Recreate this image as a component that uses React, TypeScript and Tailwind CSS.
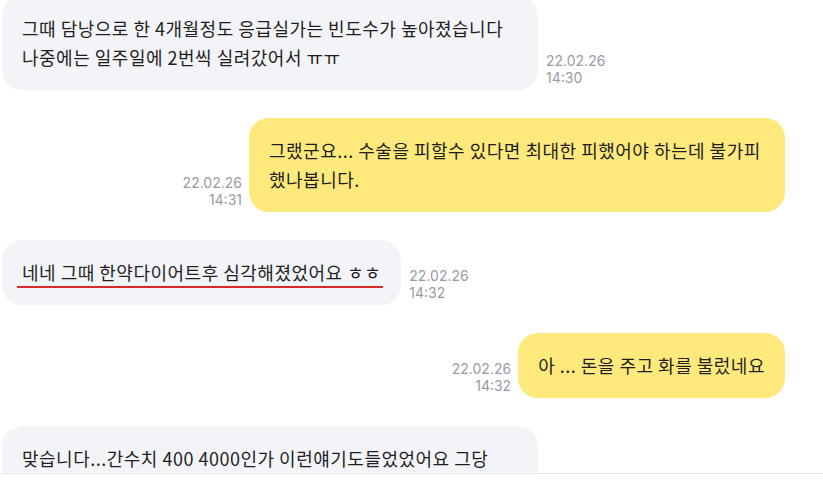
const textFont = "font-['Noto_Sans_CJK_KR','Noto_Sans',sans-serif]";
const timeFont = "font-['Inter','Noto_Sans',sans-serif]";

type Msg = {
  side: "left" | "right";
  lines: string[];
  date: string;
  time: string;
  wide?: boolean;
  mark?: boolean;
};

const messages: Msg[] = [
  {
    side: "left",
    lines: ["그때 담낭으로 한 4개월정도 응급실가는 빈도수가 높아졌습니다", "나중에는 일주일에 2번씩 실려갔어서 ㅠㅠ"],
    date: "22.02.26",
    time: "14:30",
    wide: true,
  },
  {
    side: "right",
    lines: ["그랬군요... 수술을 피할수 있다면 최대한 피했어야 하는데 불가피", "했나봅니다."],
    date: "22.02.26",
    time: "14:31",
    wide: true,
  },
  {
    side: "left",
    lines: ["네네 그때 한약다이어트후 심각해졌었어요 ㅎㅎ"],
    date: "22.02.26",
    time: "14:32",
    mark: true,
  },
  {
    side: "right",
    lines: ["아 ... 돈을 주고 화를 불렀네요"],
    date: "22.02.26",
    time: "14:32",
  },
  {
    side: "left",
    lines: ["맞습니다...간수치 400 4000인가 이런얘기도들었었어요 그당"],
    date: "22.02.26",
    time: "14:33",
    wide: true,
  },
];

function Stamp({ date, time, right }: { date: string; time: string; right?: boolean }) {
  return (
    <div
      className={`${timeFont} flex flex-col pb-[4px] text-[14px] leading-[17px] text-[#9a9aa6] ${
        right ? "items-end" : "items-start"
      }`}
    >
      <span>{date}</span>
      <span>{time}</span>
    </div>
  );
}

function Bubble({ m }: { m: Msg }) {
  const bg = m.side === "left" ? "bg-[#f3f4f8]" : "bg-[#fee97d]";
  return (
    <div
      className={`relative rounded-[20px] ${bg} ${m.wide ? "w-[536px]" : "w-fit"} px-[20px] py-[18px] ${textFont} text-[18px] leading-[29px] tracking-[0.5px] text-[#1f1f1f] whitespace-nowrap overflow-hidden`}
    >
      {m.lines.map((l, i) => (
        <div key={i}>{l}</div>
      ))}
      {m.mark && <div className="absolute left-[15px] right-[18px] bottom-[17px] h-[2px] bg-[#d92a2a]" />}
    </div>
  );
}

export default function App() {
  return (
    <div className="flex h-[483px] w-[823px] flex-col overflow-hidden bg-white">
      <div className="flex flex-1 flex-col gap-[28px] overflow-hidden">
        {messages.map((m, i) =>
          m.side === "left" ? (
            <div key={i} className={`flex items-end gap-[8px] pl-[2px] ${i === 0 ? "-mt-[4px]" : ""}`}>
              <Bubble m={m} />
              {i < 4 && <Stamp date={m.date} time={m.time} />}
            </div>
          ) : (
            <div key={i} className="flex items-end justify-end gap-[7px] pr-[38px]">
              <Stamp date={m.date} time={m.time} right />
              <Bubble m={m} />
            </div>
          )
        )}
      </div>
      <div className="h-[10px] shrink-0 border-t border-[#e6e6ea] bg-white" />
    </div>
  );
}
